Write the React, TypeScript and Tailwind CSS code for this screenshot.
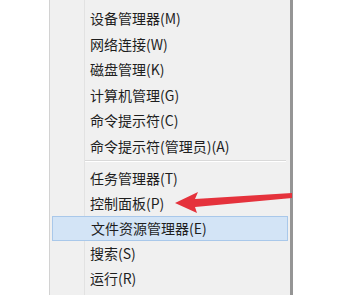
const top = ['设备管理器(M)', '网络连接(W)', '磁盘管理(K)', '计算机管理(G)', '命令提示符(C)', '命令提示符(管理员)(A)'];
const bottom = ['任务管理器(T)', '控制面板(P)', '文件资源管理器(E)', '搜索(S)', '运行(R)'];

export default function App() {
  return (
    <div className="relative w-[339px] h-[295px] overflow-hidden bg-white font-['Noto_Sans_CJK_SC','Noto_Sans',sans-serif] text-[14px] text-[#1e1e1e]">
      <div className="ml-[49px] w-[244px] h-full flex bg-[#f0f0f0] border-l border-[#d2d2d2] border-r-[3px] border-r-[#959595]">
        <div className="w-[35px] shrink-0 border-r border-[#e2e2e2]" />
        <div className="flex-1 flex flex-col pt-[5.5px]">
          {top.map((t) => (
            <div key={t} className="h-[25.5px] flex items-center pl-[5px] leading-none">{t}</div>
          ))}
          <div className="h-[7px] flex flex-col pt-[1.5px]">
            <div className="h-px bg-[#d9d9d9] mr-[4px]" />
            <div className="h-px bg-white mr-[4px]" />
          </div>
          {bottom.map((t, i) => (
            <div
              key={t}
              className={
                i === 2
                  ? 'h-[25px] flex items-center pl-[5px] leading-none -ml-[33px] pl-[38px] mr-[2px] bg-[#d3e4f6] border border-[#a9c8ea]'
                  : 'h-[25px] flex items-center pl-[5px] leading-none'
              }
            >
              {t}
            </div>
          ))}
        </div>
      </div>
      <svg className="absolute left-0 top-0" width="339" height="295" viewBox="0 0 339 295">
        <path d="M175 203 L198 192 L195 199 L292 193 L292 198 L195 207 L197 213 Z" fill="#e5323c" />
      </svg>
    </div>
  );
}
